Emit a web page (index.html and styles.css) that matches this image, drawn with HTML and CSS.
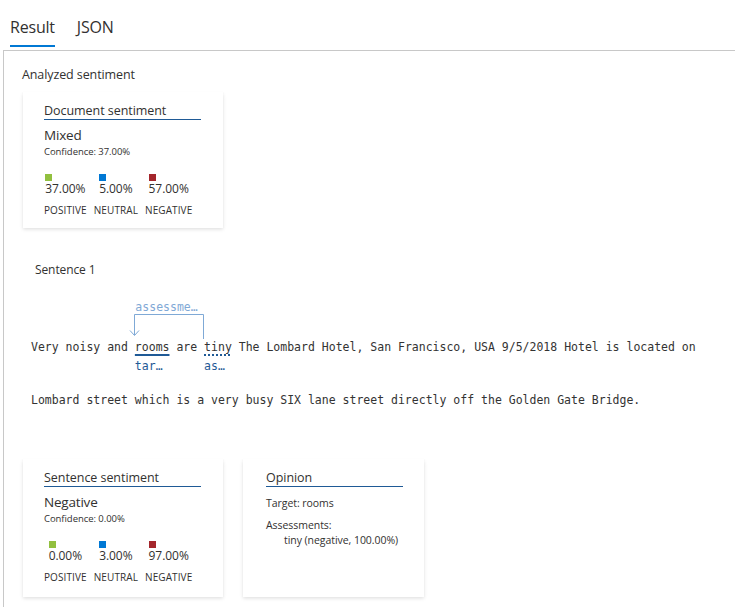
FILE: index.html
```html
<!DOCTYPE html>
<html>
<head>
<meta charset="utf-8">
<link rel="stylesheet" href="styles.css">
</head>
<body>
<div class="tabs">
  <div class="tab active">Result</div>
  <div class="tab">JSON</div>
</div>
<div class="panel">
  <div class="heading">Analyzed sentiment</div>
  <div class="card doc-card">
    <div class="card-title">Document sentiment</div>
    <div class="label-big">Mixed</div>
    <div class="confidence">Confidence: 37.00%</div>
    <div class="metrics">
      <div class="metric">
        <div class="metric-top"><span class="sq pos"></span><span class="val">37.00%</span></div>
        <div class="mlabel">POSITIVE</div>
      </div>
      <div class="metric">
        <div class="metric-top"><span class="sq neu"></span><span class="val">5.00%</span></div>
        <div class="mlabel">NEUTRAL</div>
      </div>
      <div class="metric">
        <div class="metric-top"><span class="sq neg"></span><span class="val">57.00%</span></div>
        <div class="mlabel">NEGATIVE</div>
      </div>
    </div>
  </div>

  <div class="sentence-title">Sentence 1</div>
  <div class="sent-text">
    <div class="line line1">Very noisy and <span class="word target"><span class="link"><span class="link-label">assessme…</span><svg class="link-svg" width="74" height="40" viewBox="0 0 74 40"><path d="M0.5 14.5 H69.5 V39" fill="none" stroke="#7fa9d6" stroke-width="1"/><path d="M0.5 14.5 V35" fill="none" stroke="#7fa9d6" stroke-width="1"/><path d="M-4 30.5 L0.5 35.5 L5 30.5" fill="none" stroke="#7fa9d6" stroke-width="1"/></svg></span>rooms<span class="tag">tar…</span></span> are <span class="word assess">tiny<span class="tag">as…</span></span> The Lombard Hotel, San Francisco, USA 9/5/2018 Hotel is located on</div>
    <div class="line line2">Lombard street which is a very busy SIX lane street directly off the Golden Gate Bridge.</div>
  </div>

  <div class="bottom-row">
    <div class="card sent-card">
      <div class="card-title">Sentence sentiment</div>
      <div class="label-big">Negative</div>
      <div class="confidence">Confidence: 0.00%</div>
      <div class="metrics">
        <div class="metric">
          <div class="metric-top"><span class="sq pos"></span><span class="val">0.00%</span></div>
          <div class="mlabel">POSITIVE</div>
        </div>
        <div class="metric">
          <div class="metric-top"><span class="sq neu"></span><span class="val">3.00%</span></div>
          <div class="mlabel">NEUTRAL</div>
        </div>
        <div class="metric">
          <div class="metric-top"><span class="sq neg"></span><span class="val">97.00%</span></div>
          <div class="mlabel">NEGATIVE</div>
        </div>
      </div>
    </div>
    <div class="card opinion-card">
      <div class="card-title">Opinion</div>
      <div class="op-target">Target: rooms</div>
      <div class="op-assess">Assessments:</div>
      <div class="op-item">tiny (negative, 100.00%)</div>
    </div>
  </div>
</div>
</body>
</html>
```
FILE: styles.css
```css
html, body {
  margin: 0;
  background: #ffffff;
}
body {
  font-family: "Open Sans", "Noto Sans", sans-serif;
  color: #323130;
}
.tabs {
  display: flex;
  gap: 22px;
  padding-left: 10px;
  height: 50px;
  align-items: flex-start;
}
.tab {
  font-size: 16px;
  line-height: 22px;
  padding-top: 16px;
  padding-bottom: 7px;
  border-bottom: 2px solid transparent;
  color: #323130;
  letter-spacing: -0.2px;
}
.tab.active {
  border-bottom-color: #0078d4;
}
.panel {
  margin-left: 3px;
  border-top: 1px solid #c8c8c8;
  border-left: 1px solid #c8c8c8;
  padding: 15px 0 10px 18px;
}
.heading {
  font-size: 12.5px;
  line-height: 18px;
  letter-spacing: -0.1px;
}
.card {
  background: #fff;
  box-sizing: border-box;
  box-shadow: 0 1.6px 3.6px rgba(0,0,0,0.13), 0 0.3px 0.9px rgba(0,0,0,0.11);
  padding: 10px 22px 12px 21px;
}
.doc-card {
  width: 200px;
  margin-top: 8px;
  margin-left: 1px;
  height: 136px;
}
.card-title {
  font-size: 12.5px;
  line-height: 17px;
  letter-spacing: -0.05px;
  border-bottom: 1px solid #1f5a96;
}
.label-big {
  font-size: 13.5px;
  line-height: 18px;
  margin-top: 6px;
  letter-spacing: -0.2px;
}
.confidence {
  font-size: 9.5px;
  line-height: 14px;
  margin-top: 1px;
  letter-spacing: -0.05px;
}
.metrics {
  display: flex;
  gap: 7px;
  margin-top: 15px;
}
.metric {
  display: flex;
  flex-direction: column;
  align-items: center;
}
.metric-top {
  display: flex;
  flex-direction: column;
  align-items: flex-start;
}
.sq {
  width: 7px;
  height: 7px;
}
.sq.pos { background: #92c03f; }
.sq.neu { background: #0078d4; }
.sq.neg { background: #a4262c; }
.val {
  font-size: 12px;
  line-height: 16px;
  letter-spacing: -0.05px;
}
.mlabel {
  font-size: 10px;
  line-height: 14px;
  margin-top: 6px;
  letter-spacing: 0.1px;
}
.sentence-title {
  font-size: 12px;
  line-height: 16px;
  margin-top: 34px;
  padding-left: 13px;
  letter-spacing: -0.1px;
}
.sent-text {
  font-family: "DejaVu Sans Mono", "Liberation Mono", monospace;
  font-size: 11.5px;
  color: #333333;
  padding-left: 9px;
  white-space: nowrap;
}
.line {
  line-height: 20px;
}
.line1 {
  margin-top: 59px;
}
.line2 {
  margin-top: 33px;
}
.word {
  position: relative;
  text-decoration-line: underline;
  text-decoration-thickness: 2px;
  text-underline-offset: 3px;
  text-decoration-color: #1f5a96;
}
.word.assess {
  text-decoration-style: dotted;
}
.tag {
  position: absolute;
  left: 0;
  top: calc(100% + 6px);
  line-height: 13px;
  color: #1f5a96;
  text-decoration: none;
  display: inline-block;
}
.link {
  position: absolute;
  left: -0.5px;
  bottom: 100%;
  width: 74px;
  height: 40px;
  text-decoration: none;
  display: inline-block;
}
.link-label {
  position: absolute;
  left: 1px;
  top: 1px;
  line-height: 13px;
  color: #7fa9d6;
}
.link-svg {
  position: absolute;
  left: 0;
  top: 0;
  overflow: visible;
}
.bottom-row {
  display: flex;
  gap: 20px;
  margin-top: 49px;
  margin-left: 1px;
  align-items: stretch;
}
.sent-card {
  width: 200px;
  height: 138px;
}
.opinion-card {
  width: 181px;
  padding-left: 23px;
  padding-right: 21px;
}
.op-target {
  font-size: 10.5px;
  line-height: 15px;
  margin-top: 9px;
  letter-spacing: -0.05px;
}
.op-assess {
  font-size: 10.5px;
  line-height: 15px;
  margin-top: 7px;
  letter-spacing: -0.05px;
}
.op-item {
  font-size: 10.5px;
  line-height: 15px;
  padding-left: 18px;
  white-space: nowrap;
  letter-spacing: -0.05px;
}
```
